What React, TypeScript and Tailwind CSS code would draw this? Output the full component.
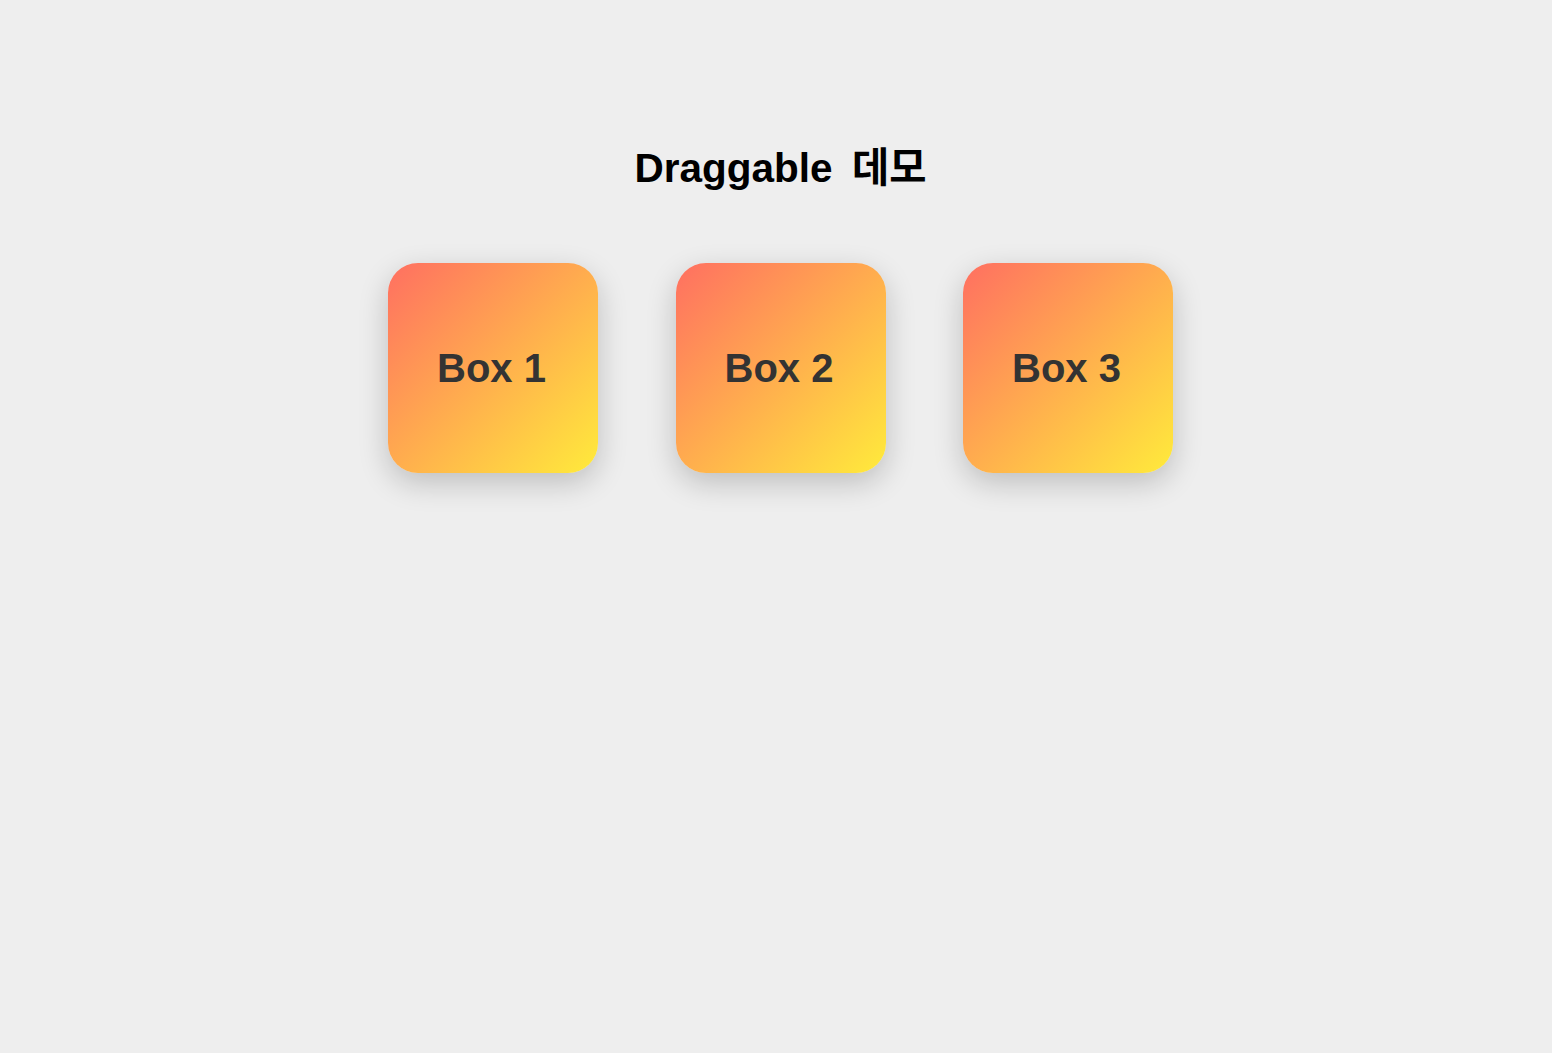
import React from "react";

export default function App() {
  const boxes = ["Box 1", "Box 2", "Box 3"];
  return (
    <div
      className="min-h-[1053px] w-full bg-[#eeeeee] pl-[9px]"
      style={{ fontFamily: '"Liberation Sans", Arial, "Noto Sans CJK KR", sans-serif' }}
    >
      <div className="flex flex-col items-center pt-[145px]">
        <h1 className="m-0 text-[40.5px] leading-[46px] font-bold text-black">
          Draggable <span className="ml-[8px]">데모</span>
        </h1>
        <div className="mt-[72px] flex gap-[77.5px]">
          {boxes.map((b) => (
            <div
              key={b}
              className="flex h-[210px] w-[210px] cursor-grab items-center justify-center rounded-[30px] bg-[linear-gradient(135deg,#ff6f61,#ffeb3b)] shadow-[0_10px_30px_rgba(0,0,0,0.2)] select-none"
            >
              <span className="-ml-[3px] text-[40px] leading-[46px] font-bold text-[#333333]">{b}</span>
            </div>
          ))}
        </div>
      </div>
    </div>
  );
}
